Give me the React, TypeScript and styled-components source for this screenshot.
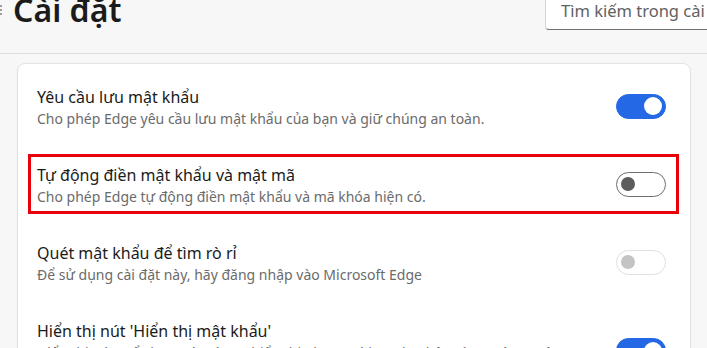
import React from 'react'
import styled, { createGlobalStyle } from 'styled-components'

const GlobalStyle = createGlobalStyle`
  html, body {
    margin: 0;
    padding: 0;
    background: #f7f7f7;
  }
  body {
    font-family: "Noto Sans", "Segoe UI", Arial, sans-serif;
    color: #1b1b1b;
  }
`

type ToggleState = 'on' | 'off' | 'disabled'

interface Setting {
  title: string
  desc: string
  state: ToggleState
  highlighted?: boolean
}

const settings: Setting[] = [
  {
    title: 'Yêu cầu lưu mật khẩu',
    desc: 'Cho phép Edge yêu cầu lưu mật khẩu của bạn và giữ chúng an toàn.',
    state: 'on',
  },
  {
    title: 'Tự động điền mật khẩu và mật mã',
    desc: 'Cho phép Edge tự động điền mật khẩu và mã khóa hiện có.',
    state: 'off',
    highlighted: true,
  },
  {
    title: 'Quét mật khẩu để tìm rò rỉ',
    desc: 'Để sử dụng cài đặt này, hãy đăng nhập vào Microsoft Edge',
    state: 'disabled',
  },
  {
    title: "Hiển thị nút 'Hiển thị mật khẩu'",
    desc: 'Hiển thị nút. Để chọn nút này sẽ hiển thị những gì bạn đã nhập vào trường mật khẩu. Một số trang web có thể ghi đè cài đặt này.',
    state: 'on',
  },
]

const App = () => {
  return (
    <>
      <GlobalStyle />
      <Page>
        <Header>
          <TitleGroup>
            <MenuIcon width="16" height="16" viewBox="0 0 16 16">
              <path d="M1 4h14M1 8h14M1 12h14" stroke="#424242" strokeWidth="1" />
            </MenuIcon>
            <Title>Cài đặt</Title>
          </TitleGroup>
          <SearchBox>Tìm kiếm trong cài đặt</SearchBox>
        </Header>

        <Card>
          {settings.map((s, i) => (
            <Row key={i} highlighted={s.highlighted}>
              <TextBlock>
                <RowTitle>{s.title}</RowTitle>
                <RowDesc>{s.desc}</RowDesc>
              </TextBlock>
              <Toggle state={s.state}>
                <Knob state={s.state} />
              </Toggle>
            </Row>
          ))}
        </Card>
      </Page>
    </>
  )
}

export default App

const Page = styled.div`
  width: 707px;
  height: 348px;
  overflow: hidden;
  background: #f7f7f7;
`

const Header = styled.div`
  height: 53px;
  border-bottom: 1px solid #e0e0e0;
  display: flex;
  justify-content: space-between;
  align-items: flex-start;
`

const TitleGroup = styled.div`
  display: flex;
  align-items: flex-start;
`

const MenuIcon = styled.svg`
  margin: 2px 0 0 -13px;
`

const Title = styled.h1`
  margin: -9px 0 0 10px;
  font-size: 32px;
  line-height: 38px;
  font-weight: 600;
  color: #1b1b1b;
`

const SearchBox = styled.div`
  margin: -10px -40px 0 0;
  width: 202px;
  height: 40px;
  box-sizing: border-box;
  padding: 8px 0 0 15px;
  background: #ffffff;
  border: 1px solid #d6d6d6;
  border-bottom: 1px solid #707070;
  border-radius: 4px;
  font-size: 16.5px;
  color: #616161;
  white-space: nowrap;
  overflow: hidden;
`

const Card = styled.div`
  margin: 9px 16px 0 17px;
  background: #ffffff;
  border: 1px solid #e3e3e3;
  border-radius: 8px;
  box-shadow: 0 1px 2px rgba(0, 0, 0, 0.04);
  padding: 12px 11px 0 10px;
  display: flex;
  flex-direction: column;
  gap: 18px;
`

const Row = styled.div<{ highlighted?: boolean }>`
  min-height: 60px;
  box-sizing: border-box;
  padding: 7px 13px 7px 9px;
  display: flex;
  align-items: center;
  justify-content: space-between;
  gap: 20px;
  outline: ${p => (p.highlighted ? '3px solid #e8000b' : 'none')};
  outline-offset: -3px;
`

const TextBlock = styled.div`
  display: flex;
  flex-direction: column;
  min-width: 0;
  max-width: 540px;
  padding-top: 4px;
`

const RowTitle = styled.div`
  font-size: 16px;
  line-height: 21px;
  color: #1b1b1b;
`

const RowDesc = styled.div`
  font-size: 14px;
  line-height: 21px;
  color: #6b6b6b;
`

const Toggle = styled.div<{ state: ToggleState }>`
  flex: none;
  width: 50px;
  height: 25px;
  box-sizing: border-box;
  border-radius: 13px;
  display: flex;
  align-items: center;
  justify-content: ${p => (p.state === 'on' ? 'flex-end' : 'flex-start')};
  padding: 0 3px;
  background: ${p => (p.state === 'on' ? '#2468e6' : '#ffffff')};
  border: 1px solid
    ${p => (p.state === 'on' ? '#2468e6' : p.state === 'off' ? '#6e6e6e' : '#e0e0e0')};
`

const Knob = styled.div<{ state: ToggleState }>`
  width: ${p => (p.state === 'on' ? '18px' : '14px')};
  height: ${p => (p.state === 'on' ? '18px' : '14px')};
  margin: 0 ${p => (p.state === 'on' ? '0' : '1px')};
  border-radius: 50%;
  background: ${p => (p.state === 'on' ? '#ffffff' : p.state === 'off' ? '#5c5c5c' : '#c4c4c4')};
`
